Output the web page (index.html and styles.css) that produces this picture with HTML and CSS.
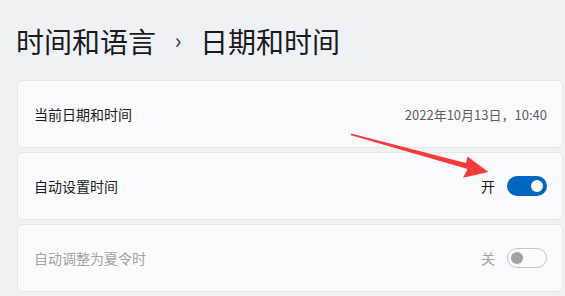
FILE: index.html
```html
<!DOCTYPE html>
<html lang="zh-CN">
<head>
<meta charset="utf-8">
<link rel="stylesheet" href="styles.css">
</head>
<body>
<div class="page">
  <h1 class="title"><span>时间和语言</span><span class="sep">›</span><span>日期和时间</span></h1>
  <div class="cards">
    <div class="card">
      <span class="label">当前日期和时间</span>
      <span class="value">2022年10月13日，10:40</span>
    </div>
    <div class="card">
      <span class="label">自动设置时间</span>
      <div class="ctrl">
        <span class="state">开</span>
        <span class="toggle on"><span class="knob"></span></span>
      </div>
    </div>
    <div class="card disabled">
      <span class="label">自动调整为夏令时</span>
      <div class="ctrl">
        <span class="state">关</span>
        <span class="toggle off"><span class="knob"></span></span>
      </div>
    </div>
  </div>
</div>
<svg class="arrow" width="565" height="296" viewBox="0 0 565 296">
  <polygon points="351,133.4 466,163 467.5,156.6 488.5,172 463,177.8 467.5,169 351,135.2" fill="#f63b3b"/>
</svg>
</body>
</html>
```

FILE: styles.css
```css
html, body {
  margin: 0;
  padding: 0;
}
body {
  width: 565px;
  height: 296px;
  overflow: hidden;
  background: #eef2f7;
  font-family: "Noto Sans CJK SC", "Noto Sans", sans-serif;
  position: relative;
}
.page {
  padding: 21px 2px 0 17px;
}
.title {
  margin: 0 0 0 -1px;
  height: 40px;
  line-height: 40px;
  font-size: 28px;
  font-weight: 400;
  color: #1a1a1a;
  display: flex;
  align-items: center;
}
.title .sep {
  font-size: 22px;
  width: 44px;
  text-align: center;
  color: #333;
  position: relative;
  top: -2px;
}
.cards {
  margin-top: 19px;
  display: flex;
  flex-direction: column;
  gap: 4px;
}
.card {
  height: 66px;
  border: 1px solid #e3e6ec;
  border-radius: 5px;
  background: #f9fafd;
  display: flex;
  align-items: center;
  justify-content: space-between;
  padding: 0 15px 0 16px;
}
.label {
  font-size: 14px;
  color: #1b1b1b;
}
.value {
  font-size: 13px;
  color: #5d5d5d;
}
.ctrl {
  display: flex;
  align-items: center;
  gap: 12px;
}
.state {
  font-size: 14px;
  color: #1b1b1b;
}
.toggle {
  width: 40px;
  height: 20px;
  box-sizing: border-box;
  border-radius: 10px;
  display: flex;
  align-items: center;
}
.toggle.on {
  background: #0067c0;
  justify-content: flex-end;
  padding-right: 4px;
}
.toggle.on .knob {
  width: 12px;
  height: 12px;
  border-radius: 50%;
  background: #ffffff;
}
.toggle.off {
  border: 1px solid #c6c6c6;
  background: #fbfbfb;
  padding-left: 3px;
}
.toggle.off .knob {
  width: 12px;
  height: 12px;
  border-radius: 50%;
  background: #a2a2a2;
}
.card.disabled .label,
.card.disabled .state {
  color: #a3a3a3;
}
.arrow {
  position: absolute;
  left: 0;
  top: 0;
}
```
